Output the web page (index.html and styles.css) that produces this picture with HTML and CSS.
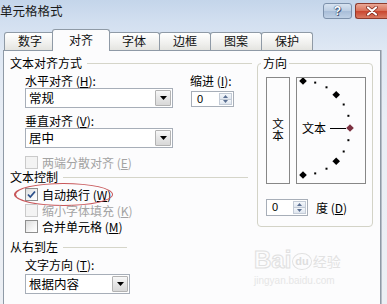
FILE: index.html
```html
<!DOCTYPE html>
<html lang="zh-CN">
<head>
<meta charset="utf-8">
<title>单元格格式</title>
<link rel="stylesheet" href="styles.css">
</head>
<body>
<div class="window">
  <div class="titlebar">
    <span class="title">单元格格式</span>
    <div class="caption-btns">
      <span class="cbtn help">?</span>
      <span class="cbtn close">
        <svg width="14" height="10" viewBox="0 0 14 10"><path d="M3 1.5 L11 8.5 M11 1.5 L3 8.5" stroke="#7a2418" stroke-width="3.6" stroke-linecap="round"/><path d="M3 1.5 L11 8.5 M11 1.5 L3 8.5" stroke="#fff" stroke-width="2.2" stroke-linecap="round"/></svg>
      </span>
    </div>
  </div>
  <div class="tabs">
    <span class="tab">数字</span>
    <span class="tab active">对齐</span>
    <span class="tab">字体</span>
    <span class="tab">边框</span>
    <span class="tab">图案</span>
    <span class="tab">保护</span>
  </div>
  <div class="panel">
    <div class="left-col">
      <div class="section-title st-align"><span>文本对齐方式</span><i class="rule"></i></div>
      <div class="align-row">
        <div class="align-col">
          <div class="label">水平对齐 (<u>H</u>):</div>
          <div class="combo"><span class="combo-text">常规</span><span class="combo-btn"><svg width="7" height="4" viewBox="0 0 7 4"><path d="M0 0H7L3.5 4Z" fill="#000"/></svg></span></div>
          <div class="label label-gap">垂直对齐 (<u>V</u>):</div>
          <div class="combo"><span class="combo-text">居中</span><span class="combo-btn"><svg width="7" height="4" viewBox="0 0 7 4"><path d="M0 0H7L3.5 4Z" fill="#000"/></svg></span></div>
        </div>
        <div class="indent-col">
          <div class="label">缩进 (<u>I</u>):</div>
          <div class="spin spin-indent">
            <span class="spin-val">0</span>
            <span class="spin-btns">
              <i class="sb"><svg width="5" height="3" viewBox="0 0 5 3"><path d="M0 3H5L2.5 0Z" fill="#5a6f92"/></svg></i>
              <i class="sb"><svg width="5" height="3" viewBox="0 0 5 3"><path d="M0 0H5L2.5 3Z" fill="#5a6f92"/></svg></i>
            </span>
          </div>
        </div>
      </div>
      <div class="check disabled first-check"><span class="cb"></span><span>两端分散对齐 (<u>E</u>)</span></div>
      <div class="section-title st-control"><span>文本控制</span><i class="rule"></i></div>
      <div class="check check-wrap"><span class="cb checked"><svg width="11" height="11" viewBox="0 0 11 11"><path d="M2 5.5 L4.3 8 L9 2.5" fill="none" stroke="#2b4f8a" stroke-width="1.8"/></svg></span><span>自动换行 (<u>W</u>)</span>
        <span class="ellipse"></span>
      </div>
      <div class="check disabled"><span class="cb"></span><span>缩小字体填充 (<u>K</u>)</span></div>
      <div class="check"><span class="cb"></span><span>合并单元格 (<u>M</u>)</span></div>
      <div class="section-title st-rtl"><span>从右到左</span><i class="rule"></i></div>
      <div class="rtl-body">
        <div class="label">文字方向 (<u>T</u>):</div>
        <div class="combo combo-short"><span class="combo-text">根据内容</span><span class="combo-btn"><svg width="7" height="4" viewBox="0 0 7 4"><path d="M0 0H7L3.5 4Z" fill="#000"/></svg></span></div>
      </div>
    </div>
    <fieldset class="orient">
      <legend>方向</legend>
      <div class="orient-row">
        <div class="vtext"><span class="vtext-run">文本</span></div>
        <div class="dial">
          <svg width="68" height="105" viewBox="0 0 68 105">
            <g fill="#000">
              <polygon points="6,-0.8 9.8,3 6,6.8 2.2,3"/>
              <polygon points="39.2,13 43,16.8 39.2,20.6 35.4,16.8"/>
              <polygon points="39.2,79.4 43,83.2 39.2,87 35.4,83.2"/>
              <polygon points="6,93.2 9.8,97 6,100.8 2.2,97"/>
              <rect x="17.2" y="3.6" width="2" height="2"/>
              <rect x="28.5" y="8.3" width="2" height="2"/>
              <rect x="45.7" y="25.5" width="2" height="2"/>
              <rect x="50.4" y="36.8" width="2" height="2"/>
              <rect x="50.4" y="61.2" width="2" height="2"/>
              <rect x="45.7" y="72.5" width="2" height="2"/>
              <rect x="28.5" y="89.7" width="2" height="2"/>
              <rect x="17.2" y="94.4" width="2" height="2"/>
            </g>
            <text x="5" y="54.5" class="dial-text">文本</text>
            <line x1="33" y1="50.5" x2="49" y2="50.5" stroke="#000" stroke-width="1"/>
            <polygon points="53,46.2 56.8,50 53,53.8 49.2,50" fill="#7c3040"/>
          </svg>
        </div>
      </div>
      <div class="deg-row">
        <div class="spin spin-deg">
          <span class="spin-val">0</span>
          <span class="spin-btns">
            <i class="sb"><svg width="5" height="3" viewBox="0 0 5 3"><path d="M0 3H5L2.5 0Z" fill="#5a6f92"/></svg></i>
            <i class="sb"><svg width="5" height="3" viewBox="0 0 5 3"><path d="M0 0H5L2.5 3Z" fill="#5a6f92"/></svg></i>
          </span>
        </div>
        <span class="deg-label">度 (<u>D</u>)</span>
      </div>
    </fieldset>
    <div class="watermark">
      <div class="wm-logo"><span class="wm-bai">Bai</span><span class="wm-du">du</span><span class="wm-jy">经验</span></div>
      <div class="wm-url">jingyan.baidu.com</div>
    </div>
  </div>
</div>
</body>
</html>
```

FILE: styles.css
```css
* { box-sizing: border-box; }
html, body { margin: 0; padding: 0; }
body {
  width: 387px;
  height: 304px;
  overflow: hidden;
  font-family: "Noto Sans CJK SC", "Liberation Sans", sans-serif;
  font-size: 12px;
  color: #000;
  background: #e9eef5;
}
u { text-decoration: underline; }

.window {
  width: 387px;
  height: 304px;
  display: flex;
  flex-direction: column;
  background: linear-gradient(#c4d5ea 0px, #d2dff0 22px, #dfe8f4 50px, #e9eef5 120px, #eceff4 100%);
}

/* title bar */
.titlebar {
  height: 24px;
  flex: none;
  display: flex;
  justify-content: space-between;
  align-items: flex-start;
}
.title {
  margin-top: 3px;
  font-size: 12.5px;
  line-height: 15px;
  color: #1a1a1a;
}
.caption-btns {
  display: flex;
  gap: 3px;
  margin-top: 3px;
}
.cbtn {
  height: 16px;
  display: flex;
  align-items: center;
  justify-content: center;
  border-radius: 3px;
}
.help {
  width: 29px;
  border: 1px solid #7d91ab;
  background: linear-gradient(#d7e3f1, #bccde2 50%, #a8bdd8 51%, #bfd0e5);
  color: #fff;
  font-family: "Liberation Sans", sans-serif;
  font-weight: bold;
  font-size: 12px;
  line-height: 14px;
  text-shadow: 0 0 1px #34486a, 0 0 1px #34486a, 1px 1px 0 #4a5f82;
}
.close {
  width: 32px;
  border: 1px solid #8e3b2d;
  border-right: none;
  border-radius: 3px 0 0 3px;
  background: linear-gradient(#eaa896, #d87058 50%, #c9452e 51%, #d97a62);
}

/* tabs */
.tabs {
  height: 26px;
  flex: none;
  display: flex;
  align-items: flex-end;
  padding-left: 4px;
  position: relative;
  z-index: 2;
}
.tab {
  height: 18px;
  padding: 0 13px;
  border: 1px solid #8f9aa6;
  border-bottom: none;
  border-radius: 3px 3px 0 0;
  background: linear-gradient(#ffffff, #f0f0ee 60%, #e4e4e0);
  line-height: 16px;
  margin-right: -1px;
  color: #111;
}
.tab.active {
  height: 22px;
  margin: 0 -2px -1px -3px;
  padding: 2px 16px 0;
  background: #fcfcfd;
  position: relative;
  z-index: 3;
}

/* panel */
.panel {
  flex: 1;
  margin: 0 6px 0 3px;
  border: 1px solid #8f9aa6;
  border-bottom: none;
  background: #fcfcfd;
  display: grid;
  grid-template-columns: 247px 116px;
  align-items: start;
  padding: 5px 0 0 6px;
  position: relative;
  box-shadow: 1px 0 0 #b7bec8;
}

.section-title {
  display: flex;
  align-items: center;
  height: 14px;
  line-height: 14px;
}
.section-title .rule {
  flex: 1;
  height: 1px;
  background: #d5d5c9;
  margin-left: 5px;
}
.st-align .rule { margin-right: 5px; }
.st-control .rule { margin-right: 9px; }
.st-rtl { width: 117px; margin-top: 6px; }

.label {
  height: 14px;
  line-height: 14px;
  white-space: nowrap;
}
.label-gap { margin-top: 6px; }

.align-row {
  display: flex;
  margin-top: 4px;
  padding-left: 15px;
}
.align-col {
  width: 148px;
  display: flex;
  flex-direction: column;
}
.indent-col {
  margin-left: 17px;
  display: flex;
  flex-direction: column;
}

.combo {
  display: flex;
  height: 20px;
  width: 148px;
  border: 1px solid #a7aeb8;
  background: #fff;
  padding: 1px;
}
.combo-short { width: 105px; }
.combo-text {
  flex: 1;
  line-height: 16px;
  padding-left: 2px;
  font-size: 12.5px;
}
.combo-btn {
  width: 16px;
  border: 1px solid #b3b3b3;
  border-radius: 1px;
  background: linear-gradient(#f8f8f8, #e6e6e6 50%, #d8d8d8);
  display: flex;
  align-items: center;
  justify-content: center;
}

.spin {
  display: flex;
  border: 1px solid #a7aeb8;
  background: #fff;
}
.spin-indent {
  width: 43px;
  height: 16px;
  margin: 3px 0 0 1px;
}
.spin-deg {
  width: 42px;
  height: 17px;
}
.spin-val {
  flex: 1;
  padding-left: 5px;
  font-family: "Liberation Sans", sans-serif;
  font-size: 11px;
  line-height: 14px;
}
.spin-btns {
  width: 15px;
  display: flex;
  flex-direction: column;
  padding: 1px;
  gap: 0;
}
.sb {
  flex: 1;
  display: flex;
  align-items: center;
  justify-content: center;
  background: linear-gradient(#f4f7fb, #dfe6ef);
  border: 1px solid #c3cbd6;
}
.sb + .sb { border-top: none; }

/* checkboxes */
.check {
  height: 16px;
  display: flex;
  align-items: center;
  padding-left: 15px;
  gap: 4px;
  position: relative;
  white-space: nowrap;
}
.first-check { margin-top: 6px; }
.check-wrap { margin-top: 2px; }
.cb {
  width: 13px;
  height: 13px;
  flex: none;
  border: 1px solid #8f8f8f;
  background: linear-gradient(135deg, #dcdcdc, #f8f8f8 70%, #fff);
  display: flex;
  align-items: center;
  justify-content: center;
}
.check.disabled { color: #a3a3a3; }
.check.disabled .cb {
  border-color: #cacaca;
  background: #f3f3f3;
}
.ellipse {
  position: absolute;
  left: 4px;
  top: -3px;
  width: 99px;
  height: 23px;
  border: 1.5px solid #c8575a;
  border-left-width: 2px;
  border-radius: 50%;
  pointer-events: none;
}

.rtl-body {
  padding-left: 15px;
  margin-top: 4px;
}
.rtl-body .combo { margin-top: 2px; }

/* orientation group */
.orient {
  margin: 0;
  padding: 7px 6px 10px 8px;
  border: 1px solid #d3d3c7;
  border-radius: 4px;
  min-width: 0;
}
.orient legend {
  padding: 0 2px;
  margin-left: -5px;
  line-height: 14px;
  height: 14px;
}
.orient-row {
  display: flex;
  gap: 6px;
}
.vtext {
  width: 24px;
  height: 107px;
  border: 1px solid #878787;
  display: flex;
  align-items: center;
  justify-content: center;
  padding-bottom: 3px;
}
.vtext-run {
  writing-mode: vertical-rl;
  text-orientation: upright;
  font-size: 11.5px;
  line-height: 14px;
}
.dial {
  width: 70px;
  height: 107px;
  border: 1px solid #878787;
}
.dial svg { display: block; }
.dial-text {
  font-family: "Noto Sans CJK SC", sans-serif;
  font-size: 12px;
}
.deg-row {
  display: flex;
  align-items: center;
  gap: 8px;
  margin-top: 15px;
}
.deg-label { line-height: 14px; }

/* watermark */
.watermark {
  position: absolute;
  left: 250px;
  top: 196px;
  width: 100px;
  color: #e9e9e9;
  pointer-events: none;
}
.wm-logo {
  display: flex;
  align-items: flex-end;
  gap: 1px;
  font-family: "Liberation Sans", sans-serif;
  font-weight: bold;
}
.wm-bai { font-size: 24px; line-height: 26px; color: transparent; -webkit-text-stroke: 1px #e0e0e0; }
.wm-du { font-size: 11px; line-height: 15px; border: 1px solid #e2e2e2; border-radius: 50%; padding: 0 2px; color: #dedede; margin-bottom: 3px; }
.wm-jy { font-family: "Noto Sans CJK SC", sans-serif; font-size: 14px; line-height: 20px; color: #e2e2e2; font-weight: normal; margin-bottom: 2px; }
.wm-url {
  font-family: "Liberation Sans", sans-serif;
  font-size: 10px;
  line-height: 12px;
  color: #e6e6e6;
  margin-top: 2px;
}
```
